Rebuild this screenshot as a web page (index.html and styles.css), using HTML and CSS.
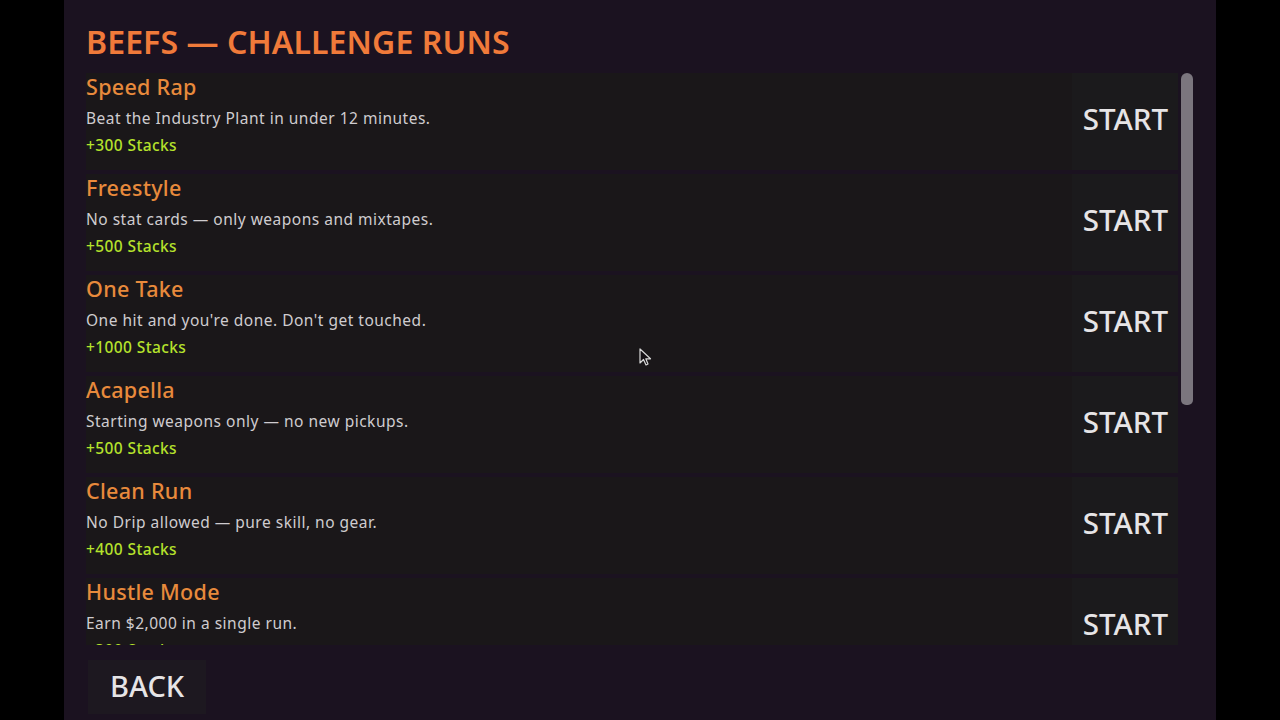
FILE: index.html
```html
<!DOCTYPE html>
<html>
<head>
<meta charset="utf-8">
<link rel="stylesheet" href="styles.css">
</head>
<body>
<div class="panel">
  <h1 class="heading">BEEFS — CHALLENGE RUNS</h1>
  <div class="scroller">
    <div class="list">
      <div class="row">
        <div class="info">
          <div class="name">Speed Rap</div>
          <div class="desc">Beat the Industry Plant in under 12 minutes.</div>
          <div class="reward">+300 Stacks</div>
        </div>
        <button class="start">START</button>
      </div>
      <div class="row">
        <div class="info">
          <div class="name">Freestyle</div>
          <div class="desc">No stat cards — only weapons and mixtapes.</div>
          <div class="reward">+500 Stacks</div>
        </div>
        <button class="start">START</button>
      </div>
      <div class="row">
        <div class="info">
          <div class="name">One Take</div>
          <div class="desc">One hit and you're done. Don't get touched.</div>
          <div class="reward">+1000 Stacks</div>
        </div>
        <button class="start">START</button>
      </div>
      <div class="row">
        <div class="info">
          <div class="name">Acapella</div>
          <div class="desc">Starting weapons only — no new pickups.</div>
          <div class="reward">+500 Stacks</div>
        </div>
        <button class="start">START</button>
      </div>
      <div class="row">
        <div class="info">
          <div class="name">Clean Run</div>
          <div class="desc">No Drip allowed — pure skill, no gear.</div>
          <div class="reward">+400 Stacks</div>
        </div>
        <button class="start">START</button>
      </div>
      <div class="row">
        <div class="info">
          <div class="name">Hustle Mode</div>
          <div class="desc">Earn $2,000 in a single run.</div>
          <div class="reward">+300 Stacks</div>
        </div>
        <button class="start">START</button>
      </div>
      <div class="row">
        <div class="info">
          <div class="name">Underground</div>
          <div class="desc">Clear every floor without visiting a shop.</div>
          <div class="reward">+600 Stacks</div>
        </div>
        <button class="start">START</button>
      </div>
      <div class="row">
        <div class="info">
          <div class="name">Diss Track</div>
          <div class="desc">Defeat every boss with a single weapon.</div>
          <div class="reward">+700 Stacks</div>
        </div>
        <button class="start">START</button>
      </div>
      <div class="row">
        <div class="info">
          <div class="name">Mixtape Only</div>
          <div class="desc">Only mixtapes deal damage.</div>
          <div class="reward">+800 Stacks</div>
        </div>
        <button class="start">START</button>
      </div>
      <div class="row">
        <div class="info">
          <div class="name">Platinum</div>
          <div class="desc">Complete every other challenge run.</div>
          <div class="reward">+1500 Stacks</div>
        </div>
        <button class="start">START</button>
      </div>
    </div>
    <div class="track"><div class="thumb"></div></div>
  </div>
  <div class="footer">
    <button class="back">BACK</button>
  </div>
  <svg class="cursor" width="14" height="20" viewBox="0 0 14 20">
    <path d="M1 1 L1 15 L4.5 11.5 L7 17 L9 16 L6.8 10.8 L11.5 10.8 Z" fill="#141014" stroke="#d8d8d8" stroke-width="1.2" stroke-linejoin="round"/>
  </svg>
</div>
</body>
</html>
```
FILE: styles.css
```css
html, body {
  margin: 0;
  padding: 0;
  background: #000;
  height: 720px;
  overflow: hidden;
}
body {
  font-family: "Noto Sans", "Open Sans", sans-serif;
}
.panel {
  position: relative;
  width: 1152px;
  height: 720px;
  margin: 0 auto;
  background: #1b1220;
  box-sizing: border-box;
  padding: 20px 22px 0 22px;
  display: flex;
  flex-direction: column;
}
.heading {
  margin: 0;
  font-size: 32px;
  font-weight: 600;
  color: #f07a3a;
  line-height: 44px;
  height: 53px;
  letter-spacing: 0.1px;
}
.scroller {
  height: 572px;
  display: flex;
  gap: 2px;
}
.list {
  flex: 1;
  overflow: hidden;
  display: flex;
  flex-direction: column;
  gap: 4px;
}
.track {
  width: 14px;
  padding: 0 1px;
  box-sizing: border-box;
}
.thumb {
  height: 332px;
  background: #7b767e;
  border-radius: 6px 6px 5px 5px;
}
.row {
  flex: 0 0 97px;
  display: flex;
  align-items: stretch;
  background: #1a1719;
}
.info {
  flex: 1;
}
.name {
  font-size: 21.5px;
  font-weight: 500;
  color: #e88a3c;
  line-height: 28px;
  letter-spacing: 0.3px;
}
.desc {
  margin-top: 7px;
  font-size: 15.5px;
  color: #cfcccf;
  line-height: 20px;
  letter-spacing: 0.5px;
}
.reward {
  margin-top: 7px;
  font-size: 15.5px;
  font-weight: 500;
  color: #b5e22c;
  line-height: 20px;
  letter-spacing: 0.4px;
}
.start {
  width: 106px;
  border: none;
  background: #1b1a1c;
  color: #e6e4e6;
  font-family: "Noto Sans", "Open Sans", sans-serif;
  font-size: 29.5px;
  font-weight: 500;
  padding: 0 10px 6px 0;
  text-align: right;
}
.footer {
  padding-top: 15px;
  padding-left: 2px;
}
.back {
  border: none;
  background: #1d1820;
  color: #e6e4e6;
  font-family: "Noto Sans", "Open Sans", sans-serif;
  font-size: 29px;
  font-weight: 500;
  padding: 10px 22px 12px 22px;
  line-height: 32px;
}
.cursor {
  position: absolute;
  left: 575px;
  top: 348px;
}
```
